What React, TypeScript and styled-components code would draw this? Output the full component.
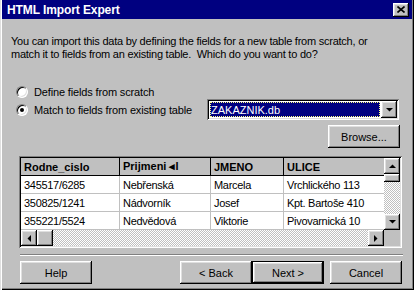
import React from 'react';
import styled, { createGlobalStyle, css } from 'styled-components';

const GlobalStyle = createGlobalStyle`
  html, body {
    margin: 0;
    padding: 0;
    background: #c0c0c0;
  }
  body {
    font-family: "Liberation Sans", Arial, sans-serif;
    font-size: 11px;
    color: #000;
  }
  * {
    box-sizing: border-box;
  }
`;

const raised = css`
  background: #c0c0c0;
  box-shadow: inset -1px -1px #000, inset 1px 1px #fff, inset -2px -2px #808080,
    inset 2px 2px #dfdfdf;
`;

const sunken = css`
  box-shadow: inset 1px 1px #808080, inset -1px -1px #fff, inset 2px 2px #000,
    inset -2px -2px #dfdfdf;
`;

const checker = css`
  background: repeating-conic-gradient(#fff 0% 25%, #c0c0c0 0% 50%) 0 0 / 2px 2px;
`;

const Window = styled.div`
  width: 414px;
  height: 290px;
  padding: 0 2px 2px 2px;
  background: #c0c0c0;
  box-shadow: inset 1px 0 #dfdfdf, inset 2px 0 #fff, inset -1px -1px #000,
    inset -2px -2px #808080;
  display: flex;
  flex-direction: column;
`;

const TitleBar = styled.div`
  height: 19px;
  background: #000080;
  color: #fff;
  display: flex;
  align-items: center;
  padding: 0 3px 0 5px;
`;

const Title = styled.span`
  flex: 1;
  font-weight: bold;
  font-size: 12px;
  letter-spacing: -0.1px;
`;

const CloseButton = styled.div`
  ${raised};
  width: 16px;
  height: 14px;
  display: flex;
  align-items: center;
  justify-content: center;
`;

const Client = styled.div`
  flex: 1;
  display: flex;
  flex-direction: column;
  padding: 16px 12px 0 9px;
`;

const Intro = styled.p`
  margin: 0;
  line-height: 13px;
  letter-spacing: -0.24px;
`;

const Options = styled.div`
  margin: 24px 0 0 5px;
  display: flex;
  flex-direction: column;
`;

const OptionRow = styled.div<{ $height: number }>`
  height: ${(p) => p.$height}px;
  display: flex;
  align-items: center;
`;

const RadioLabel = styled.label`
  display: flex;
  align-items: center;
  gap: 6px;
  letter-spacing: -0.15px;
`;

const RadioCircle = styled.span<{ $checked?: boolean }>`
  width: 12px;
  height: 12px;
  border-radius: 50%;
  background: #fff;
  border: 1px solid;
  border-color: #808080 #fff #fff #808080;
  box-shadow: inset 1px 1px #000, inset -1px -1px #dfdfdf;
  display: flex;
  align-items: center;
  justify-content: center;
  &::after {
    content: '';
    display: ${(p) => (p.$checked ? 'block' : 'none')};
    width: 4px;
    height: 4px;
    border-radius: 50%;
    background: #000;
  }
`;

const Combo = styled.div`
  ${sunken};
  background: #fff;
  width: 192px;
  height: 21px;
  margin-left: auto;
  margin-right: 1px;
  padding: 2px;
  display: flex;
`;

const ComboField = styled.div`
  flex: 1;
  padding: 1px;
  display: flex;
`;

const ComboValue = styled.div`
  flex: 1;
  background: #000080;
  color: #fff;
  outline: 1px dotted #ffff80;
  outline-offset: -1px;
  padding-left: 1px;
  display: flex;
  align-items: center;
`;

const DropButton = styled.div`
  ${raised};
  width: 16px;
  display: flex;
  align-items: center;
  justify-content: center;
`;

const BrowseRow = styled.div`
  margin-top: 5px;
  display: flex;
  justify-content: flex-end;
`;

const Button = styled.div<{ $default?: boolean; $width?: number }>`
  ${raised};
  width: ${(p) => p.$width ?? 72}px;
  height: 23px;
  display: flex;
  align-items: center;
  justify-content: center;
  ${(p) =>
    p.$default &&
    css`
      box-shadow: inset 0 0 0 1px #000, inset -2px -2px #000, inset 2px 2px #fff,
        inset -3px -3px #808080, inset 3px 3px #dfdfdf;
    `}
`;

const GridFrame = styled.div`
  ${sunken};
  margin: 8px 0 0 8px;
  width: 383px;
  height: 92px;
  padding: 2px;
  display: grid;
  grid-template-columns: 363px 16px;
  grid-template-rows: 72px 16px;
`;

const DataArea = styled.div`
  background: #fff;
  overflow: hidden;
  display: grid;
  grid-template-columns: 99px 91px 73px 120px;
  grid-auto-rows: 18px;
`;

const Cell = styled.div<{ $header?: boolean }>`
  padding-left: 3px;
  white-space: nowrap;
  overflow: hidden;
  display: flex;
  align-items: center;
  background: ${(p) => (p.$header ? '#c0c0c0' : '#fff')};
  border-right: 1px solid ${(p) => (p.$header ? '#000' : '#c0c0c0')};
  border-bottom: 1px solid ${(p) => (p.$header ? '#000' : '#c0c0c0')};
  font-weight: ${(p) => (p.$header ? 'bold' : 'normal')};
  letter-spacing: ${(p) => (p.$header ? '0' : '-0.3px')};
`;

const ScrollBar = styled.div<{ $vertical?: boolean }>`
  display: flex;
  flex-direction: ${(p) => (p.$vertical ? 'column' : 'row')};
`;

const ArrowButton = styled.div`
  ${raised};
  width: 16px;
  height: 16px;
  flex: none;
  display: flex;
  align-items: center;
  justify-content: center;
`;

const Thumb = styled.div<{ $vertical?: boolean }>`
  ${raised};
  flex: none;
  width: 16px;
  height: ${(p) => (p.$vertical ? 8 : 16)}px;
`;

const Track = styled.div`
  ${checker};
  flex: 1;
`;

const Corner = styled.div`
  background: #c0c0c0;
`;

const Separator = styled.div`
  margin: 6px 0 0 9px;
  width: 383px;
  height: 2px;
  border-top: 1px solid #808080;
  border-bottom: 1px solid #fff;
`;

const Footer = styled.div`
  margin: 5px -2px 0 9px;
  display: flex;
  align-items: center;
`;

const NavGroup = styled.div`
  margin-left: auto;
  display: flex;
`;

const CancelSlot = styled.div`
  margin-left: 6px;
`;

const Arrow = ({ dir }: { dir: 'up' | 'down' | 'left' | 'right' }) => {
  const points = {
    up: '0,4 7,4 3.5,0.5',
    down: '0,0 7,0 3.5,3.5',
    left: '4,0 4,7 0.5,3.5',
    right: '0,0 0,7 3.5,3.5',
  }[dir];
  const vertical = dir === 'up' || dir === 'down';
  return (
    <svg width={vertical ? 7 : 4} height={vertical ? 4 : 7} viewBox={vertical ? '0 0 7 4' : '0 0 4 7'}>
      <polygon points={points} fill="#000" />
    </svg>
  );
};

const columns = ['Rodne_cislo', 'Prijmeni ◂l', 'JMENO', 'ULICE'];

const rows = [
  ['345517/6285', 'Nebřenská', 'Marcela', 'Vrchlického 113'],
  ['350825/1241', 'Nádvorník', 'Josef', 'Kpt. Bartoše 410'],
  ['355221/5524', 'Nedvědová', 'Viktorie', 'Pivovarnická 10'],
];

export default function App() {
  return (
    <>
      <GlobalStyle />
      <Window>
        <TitleBar>
          <Title>HTML Import Expert</Title>
          <CloseButton>
            <svg width="8" height="7" viewBox="0 0 8 7">
              <path d="M0.5 0.5 L7.5 6.5 M7.5 0.5 L0.5 6.5" stroke="#000" strokeWidth="1.6" />
            </svg>
          </CloseButton>
        </TitleBar>
        <Client>
          <Intro>
            You can import this data by defining the fields for a new table from scratch, or
            <br />
            match it to fields from an existing table.&nbsp; Which do you want to do?
          </Intro>
          <Options>
            <OptionRow $height={14}>
              <RadioLabel>
                <RadioCircle />
                Define fields from scratch
              </RadioLabel>
            </OptionRow>
            <OptionRow $height={21}>
              <RadioLabel>
                <RadioCircle $checked />
                Match to fields from existing table
              </RadioLabel>
              <Combo>
                <ComboField>
                  <ComboValue>ZAKAZNIK.db</ComboValue>
                </ComboField>
                <DropButton>
                  <Arrow dir="down" />
                </DropButton>
              </Combo>
            </OptionRow>
          </Options>
          <BrowseRow>
            <Button>Browse...</Button>
          </BrowseRow>
          <GridFrame>
            <DataArea>
              {columns.map((c) => (
                <Cell key={c} $header>
                  {c}
                </Cell>
              ))}
              {rows.map((r) => r.map((v, i) => <Cell key={r[0] + i}>{v}</Cell>))}
            </DataArea>
            <ScrollBar $vertical>
              <ArrowButton>
                <Arrow dir="up" />
              </ArrowButton>
              <Thumb $vertical />
              <Track />
              <ArrowButton>
                <Arrow dir="down" />
              </ArrowButton>
            </ScrollBar>
            <ScrollBar>
              <ArrowButton>
                <Arrow dir="left" />
              </ArrowButton>
              <Thumb />
              <Track />
              <ArrowButton>
                <Arrow dir="right" />
              </ArrowButton>
            </ScrollBar>
            <Corner />
          </GridFrame>
          <Separator />
          <Footer>
            <Button>Help</Button>
            <NavGroup>
              <Button>&lt; Back</Button>
              <Button $default>Next &gt;</Button>
              <CancelSlot>
                <Button>Cancel</Button>
              </CancelSlot>
            </NavGroup>
          </Footer>
        </Client>
      </Window>
    </>
  );
}
